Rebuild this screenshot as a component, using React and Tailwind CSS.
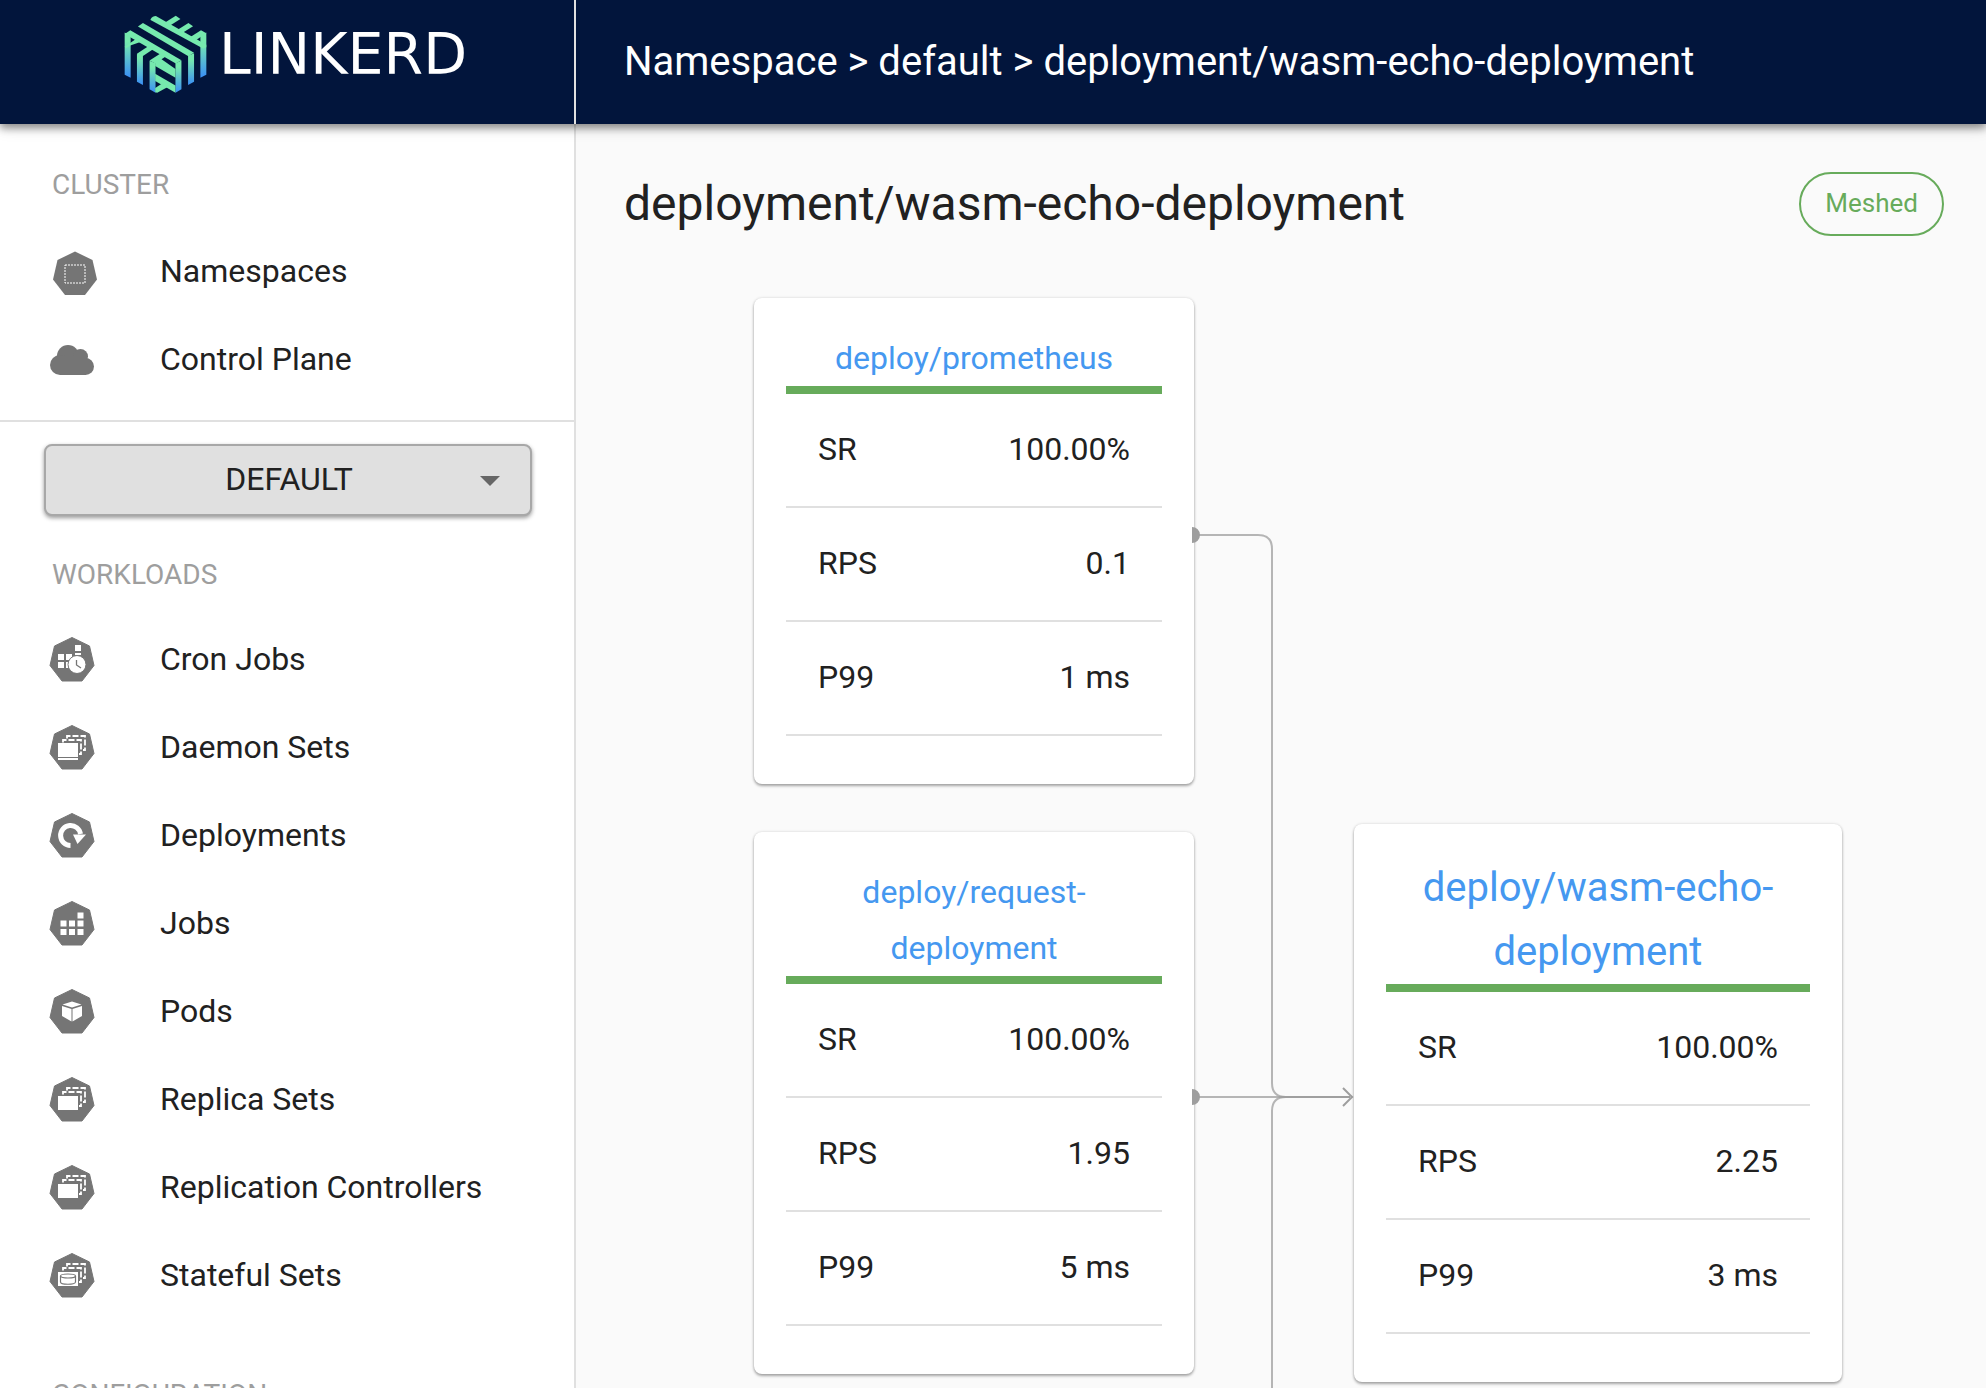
const HEPTAGON = "M24 1.5 L41.5 10 L46 29.5 L34 45 H14 L2 29.5 L6.5 10 Z";

function KubeIcon({ children }) {
  return (
    <svg viewBox="1 0 46 47" className="h-[47px] w-[46px] shrink-0" aria-hidden="true">
      <path d={HEPTAGON} fill="#757575" stroke="#757575" strokeWidth="1" strokeLinejoin="round" />
      {children}
    </svg>
  );
}

function StackedSets() {
  return (
    <g fill="none" stroke="#fff" strokeWidth="1.8">
      <path d="M19 14.5 V12 H37 V26 H35" strokeDasharray="6 2" />
      <path d="M15 18.5 V16 H33 V30 H31" strokeDasharray="6 2" />
    </g>
  );
}

const icons = {
  namespaces: (
    <svg viewBox="-2 -4 49 50" className="h-[50px] w-[49px] shrink-0" aria-hidden="true">
      <path d={HEPTAGON} fill="#757575" />
      <rect x="14" y="15" width="20" height="18" fill="none" stroke="#fff" strokeWidth="1" strokeDasharray="2 1" />
    </svg>
  ),
  cloud: (
    <svg viewBox="-1 -2 46 32" className="h-8 w-[46px] shrink-0" fill="#757575" aria-hidden="true">
      <circle cx="18" cy="11" r="11" />
      <circle cx="30.5" cy="11.5" r="7.5" />
      <circle cx="10" cy="20" r="10" />
      <circle cx="35.5" cy="21.5" r="8.5" />
      <rect x="10" y="11" width="26" height="19" />
    </svg>
  ),
  cron: (
    <KubeIcon>
      <g fill="#fff">
        <rect x="27" y="9" width="6" height="6" />
        <rect x="10" y="18" width="6" height="6" />
        <rect x="18" y="18" width="6" height="6" />
        <rect x="27" y="17" width="6" height="2" />
        <rect x="10" y="26" width="6" height="6" />
        <rect x="18" y="26" width="6" height="6" />
      </g>
      <circle cx="29" cy="28.5" r="9" fill="#fff" stroke="#757575" strokeWidth="1" />
      <path d="M28.5 24 V29 L33 32" fill="none" stroke="#757575" strokeWidth="1.3" />
    </KubeIcon>
  ),
  daemon: (
    <KubeIcon>
      <StackedSets />
      <path d="M10 19 H30 V33 H10 Z M10 34 H30 V36 H10 Z" fill="#fff" />
    </KubeIcon>
  ),
  deployment: (
    <KubeIcon>
      <path d="M22.5 33.5 A10 10 0 1 1 32.5 22" fill="none" stroke="#fff" strokeWidth="5" />
      <path d="M25 22.5 H38 L29.5 32 Z" fill="#fff" />
    </KubeIcon>
  ),
  jobs: (
    <KubeIcon>
      <g fill="#fff">
        <rect x="29.5" y="12.5" width="6" height="6" />
        <rect x="12.5" y="20.5" width="6" height="6" />
        <rect x="21" y="20.5" width="6" height="6" />
        <rect x="29.5" y="20.5" width="6" height="6" />
        <rect x="12.5" y="29" width="6" height="6" />
        <rect x="21" y="29" width="6" height="6" />
        <rect x="29.5" y="29" width="6" height="6" />
      </g>
    </KubeIcon>
  ),
  pods: (
    <KubeIcon>
      <path d="M24 13.5 L33.5 16.5 L24 19.5 L14.5 16.5 Z M14 18 L23.5 21 V33.5 L14 28 Z M34 18 L24.5 21 V33.5 L34 28 Z" fill="#fff" />
    </KubeIcon>
  ),
  replica: (
    <KubeIcon>
      <StackedSets />
      <rect x="10" y="20" width="20" height="14" fill="#fff" />
    </KubeIcon>
  ),
  stateful: (
    <KubeIcon>
      <StackedSets />
      <rect x="10" y="20" width="20" height="14" fill="#fff" />
      <g fill="none" stroke="#757575" strokeWidth="1.2">
        <ellipse cx="20" cy="24" rx="7.5" ry="2" />
        <path d="M12.5 24 V30 C12.5 33 27.5 33 27.5 30 V24" />
      </g>
    </KubeIcon>
  ),
};

function LogoMark() {
  return (
    <svg viewBox="70 46 250 236" className="h-[79px] w-[83px] shrink-0" aria-hidden="true">
      <defs>
        <linearGradient id="post" x1="0" y1="0" x2="0" y2="1">
          <stop offset="0.2" stopColor="#76eaae" />
          <stop offset="1" stopColor="#3a8ef6" />
        </linearGradient>
      </defs>
      <g fill="url(#post)">
        <path d="M72 98 L90 108 V234 L72 225 Z" />
        <path d="M109 163 L127 153 V256 L109 246 Z" />
        <path d="M147 183 L165 190 V279 L147 269 Z" />
        <path d="M225 190 L243 182 V269 L225 279 Z" />
        <path d="M263 168 L281 160 V246 L263 256 Z" />
        <path d="M300 108 L318 98 V225 L300 234 Z" />
      </g>
      <g fill="#76eaae">
        <path d="M150 58 Q156 48 166 48 L318 135 V142 L308 146 L150 60 Z" />
        <path d="M112 80 L127 69 L281 159 L264 169 Z" />
        <path d="M72 102 L89 91 L243 181 L226 191 Z" />
        <path d="M190 70 L226 47 L240 57 L210 76 Z" />
        <path d="M228 92 L264 69 L278 79 L248 98 Z" />
        <path d="M265 114 L302 91 L318 100 L286 121 Z" />
        <path d="M72 141 L106 117 L126 124 L89 137 L76 145 Z" />
        <path d="M109 162 L143 139 L162 145 L126 169 Z" />
        <path d="M147 182 L181 160 L200 167 L164 191 Z" />
        <path d="M180 176 L225 208 V234 L164 199 L164 187 Z" />
        <path d="M164 222 L225 257 V279 L164 244 Z" />
        <path d="M164 265 L187 250 L206 260 L170 279 L164 278 Z" />
      </g>
    </svg>
  );
}

function NavItem({ icon, label }) {
  return (
    <li>
      <a href="#" className="flex h-[88px] items-center pl-[49px] text-[32px] leading-[48px]">
        <span className="flex w-[111px] shrink-0 items-center">{icons[icon]}</span>
        {label}
      </a>
    </li>
  );
}

function SectionLabel({ children }) {
  return <h2 className="px-[52px] text-[28px] leading-[34px] text-[#9e9e9e]">{children}</h2>;
}

function Sidebar() {
  return (
    <nav className="w-[576px] shrink-0 border-r-2 border-[#e0e0e0] bg-white pt-[44px]">
      <SectionLabel>CLUSTER</SectionLabel>
      <ul className="pt-[25px] pb-[17px]">
        <NavItem icon="namespaces" label="Namespaces" />
        <NavItem icon="cloud" label="Control Plane" />
      </ul>
      <hr className="border-t-2 border-[#e0e0e0]" />
      <button className="mx-11 mt-[22px] flex h-[72px] w-[488px] items-center rounded-lg border-2 border-[#a8a8a8] bg-[#e0e0e0] pr-[30px] pb-0.5 text-[32px] shadow-[0_2px_4px_rgba(0,0,0,0.4)]">
        <span className="flex-1 pl-[52px] text-center">DEFAULT</span>
        <svg viewBox="0 0 20 10" className="mt-1 h-[10px] w-5" fill="#666" aria-hidden="true">
          <path d="M0 0 H20 L10 10 Z" />
        </svg>
      </button>
      <div className="pt-[42px]">
        <SectionLabel>WORKLOADS</SectionLabel>
      </div>
      <ul className="pt-[23px] pb-[59px]">
        <NavItem icon="cron" label="Cron Jobs" />
        <NavItem icon="daemon" label="Daemon Sets" />
        <NavItem icon="deployment" label="Deployments" />
        <NavItem icon="jobs" label="Jobs" />
        <NavItem icon="pods" label="Pods" />
        <NavItem icon="replica" label="Replica Sets" />
        <NavItem icon="replica" label="Replication Controllers" />
        <NavItem icon="stateful" label="Stateful Sets" />
      </ul>
      <SectionLabel>CONFIGURATION</SectionLabel>
    </nav>
  );
}

function StatsCard({ name, rows, large }) {
  return (
    <section className="rounded-lg bg-white px-8 pt-8 pb-12 shadow-[0_2px_3px_rgba(0,0,0,0.32),0_0_3px_rgba(0,0,0,0.14)]">
      <h3 className={large ? "text-center text-[40px] leading-[64px]" : "text-center text-[32px] leading-[56px]"}>
        <a href="#" className="text-[#4598f0]">
          {name.map((line) => (
            <span key={line} className="block">{line}</span>
          ))}
        </a>
      </h3>
      <table className="w-full border-separate border-spacing-0 border-t-8 border-[#67ab5b] text-[32px] leading-[48px]">
        <tbody>
          {rows.map(([label, value]) => (
            <tr key={label}>
              <th scope="row" className="h-[114px] border-b-2 border-[#e0e0e0] pb-0.5 pl-8 text-left font-normal">{label}</th>
              <td className="h-[114px] border-b-2 border-[#e0e0e0] pr-8 pb-0.5 text-right">{value}</td>
            </tr>
          ))}
        </tbody>
      </table>
    </section>
  );
}

function Connectors() {
  return (
    <svg viewBox="0 0 160 1090" className="h-[1090px] w-[160px] overflow-visible" fill="none" aria-hidden="true">
      <g stroke="#9e9e9e" strokeWidth="2" strokeOpacity="0.75">
        <path d="M0 237 H64 Q78 237 78 251 V785 Q78 799 92 799 H156" />
        <path d="M0 799 H156" />
        <path d="M78 1090 V813 Q78 799 92 799 H156" />
      </g>
      <path d="M149 790 L158 799 L149 808" stroke="#9e9e9e" strokeWidth="2" />
      <path d="M-2 229 A8 8 0 0 1 -2 245 Z M-2 791 A8 8 0 0 1 -2 807 Z" fill="#9e9e9e" />
    </svg>
  );
}

export default function App() {
  return (
    <div className="flex h-screen flex-col overflow-hidden bg-[#fafafa] font-[Roboto,sans-serif] text-[#212121]">
      <header className="z-10 flex h-[124px] shrink-0 bg-[#02153c] text-white shadow-[0_4px_8px_rgba(0,0,0,0.4),0_2px_16px_rgba(0,0,0,0.15)]">
        <div className="flex w-[576px] shrink-0 items-center gap-3 border-r-2 border-[#e0e0e0] pb-4 pl-[124px]">
          <LogoMark />
          <span className="font-['DejaVu_Sans',sans-serif] text-[57px] leading-none">LINKERD</span>
        </div>
        <div className="flex items-center pl-12 text-[40px]">Namespace &gt; default &gt; deployment/wasm-echo-deployment</div>
      </header>
      <div className="flex min-h-0 flex-1">
        <Sidebar />
        <main className="min-w-0 flex-1 pt-12 pl-12">
          <div className="flex h-16 items-center justify-between pr-[42px]">
            <h1 className="text-[48px]">deployment/wasm-echo-deployment</h1>
            <span className="flex h-16 items-center rounded-full border-2 border-[#67ab5b] px-6 pb-0.5 text-[26px] text-[#67ab5b]">Meshed</span>
          </div>
          <div className="grid grid-cols-[440fr_160px_488fr] pt-[62px] pr-[144px] pl-[130px]">
            <div className="flex flex-col gap-12">
              <StatsCard
                name={["deploy/prometheus"]}
                rows={[["SR", "100.00%"], ["RPS", "0.1"], ["P99", "1 ms"]]}
              />
              <StatsCard
                name={["deploy/request-", "deployment"]}
                rows={[["SR", "100.00%"], ["RPS", "1.95"], ["P99", "5 ms"]]}
              />
            </div>
            <Connectors />
            <div className="pt-[526px]">
              <StatsCard
                large
                name={["deploy/wasm-echo-", "deployment"]}
                rows={[["SR", "100.00%"], ["RPS", "2.25"], ["P99", "3 ms"]]}
              />
            </div>
          </div>
        </main>
      </div>
    </div>
  );
}
